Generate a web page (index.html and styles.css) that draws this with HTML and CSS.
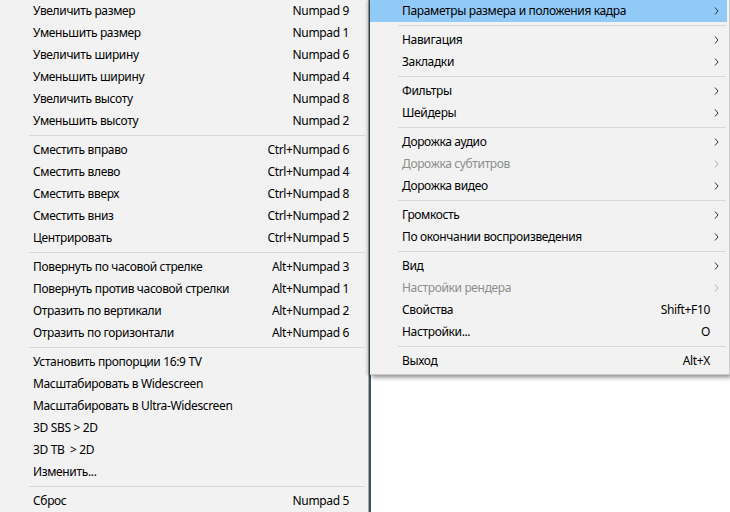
FILE: index.html
```html
<!DOCTYPE html>
<html>
  <head>
    <title>Контекстное меню</title>
    <link rel="stylesheet" href="styles.css">
  </head>
  <body>
    <div class="desk">
      <!-- submenu: frame size and position -->
      <ul class="menu menu-sub">
        <li class="item"><span>Увеличить размер</span><span class="key">Numpad 9</span></li>
        <li class="item"><span>Уменьшить размер</span><span class="key">Numpad 1</span></li>
        <li class="item"><span>Увеличить ширину</span><span class="key">Numpad 6</span></li>
        <li class="item"><span>Уменьшить ширину</span><span class="key">Numpad 4</span></li>
        <li class="item"><span>Увеличить высоту</span><span class="key">Numpad 8</span></li>
        <li class="item"><span>Уменьшить высоту</span><span class="key">Numpad 2</span></li>
        <li class="sep"></li>
        <li class="item"><span>Сместить вправо</span><span class="key">Ctrl+Numpad 6</span></li>
        <li class="item"><span>Сместить влево</span><span class="key">Ctrl+Numpad 4</span></li>
        <li class="item"><span>Сместить вверх</span><span class="key">Ctrl+Numpad 8</span></li>
        <li class="item"><span>Сместить вниз</span><span class="key">Ctrl+Numpad 2</span></li>
        <li class="item"><span>Центрировать</span><span class="key">Ctrl+Numpad 5</span></li>
        <li class="sep"></li>
        <li class="item"><span>Повернуть по часовой стрелке</span><span class="key">Alt+Numpad 3</span></li>
        <li class="item"><span>Повернуть против часовой стрелки</span><span class="key">Alt+Numpad 1</span></li>
        <li class="item"><span>Отразить по вертикали</span><span class="key">Alt+Numpad 2</span></li>
        <li class="item"><span>Отразить по горизонтали</span><span class="key">Alt+Numpad 6</span></li>
        <li class="sep"></li>
        <li class="item"><span>Установить пропорции 16:9 TV</span></li>
        <li class="item"><span>Масштабировать в Widescreen</span></li>
        <li class="item"><span>Масштабировать в Ultra-Widescreen</span></li>
        <li class="item"><span>3D SBS &gt; 2D</span></li>
        <li class="item"><span>3D TB &nbsp;&gt; 2D</span></li>
        <li class="item"><span>Изменить...</span></li>
        <li class="sep"></li>
        <li class="item"><span>Сброс</span><span class="key">Numpad 5</span></li>
      </ul>

      <!-- main player menu, drawn over the submenu -->
      <ul class="menu menu-main">
        <li class="item active"><span>Параметры размера и положения кадра</span><svg class="arrow" viewBox="0 0 5 8"><path d="M1 0.5 L4 4 L1 7.5"/></svg></li>
        <li class="sep"></li>
        <li class="item"><span>Навигация</span><svg class="arrow" viewBox="0 0 5 8"><path d="M1 0.5 L4 4 L1 7.5"/></svg></li>
        <li class="item"><span>Закладки</span><svg class="arrow" viewBox="0 0 5 8"><path d="M1 0.5 L4 4 L1 7.5"/></svg></li>
        <li class="sep"></li>
        <li class="item"><span>Фильтры</span><svg class="arrow" viewBox="0 0 5 8"><path d="M1 0.5 L4 4 L1 7.5"/></svg></li>
        <li class="item"><span>Шейдеры</span><svg class="arrow" viewBox="0 0 5 8"><path d="M1 0.5 L4 4 L1 7.5"/></svg></li>
        <li class="sep"></li>
        <li class="item"><span>Дорожка аудио</span><svg class="arrow" viewBox="0 0 5 8"><path d="M1 0.5 L4 4 L1 7.5"/></svg></li>
        <li class="item disabled"><span>Дорожка субтитров</span><svg class="arrow" viewBox="0 0 5 8"><path d="M1 0.5 L4 4 L1 7.5"/></svg></li>
        <li class="item"><span>Дорожка видео</span><svg class="arrow" viewBox="0 0 5 8"><path d="M1 0.5 L4 4 L1 7.5"/></svg></li>
        <li class="sep"></li>
        <li class="item"><span>Громкость</span><svg class="arrow" viewBox="0 0 5 8"><path d="M1 0.5 L4 4 L1 7.5"/></svg></li>
        <li class="item"><span>По окончании воспроизведения</span><svg class="arrow" viewBox="0 0 5 8"><path d="M1 0.5 L4 4 L1 7.5"/></svg></li>
        <li class="sep"></li>
        <li class="item"><span>Вид</span><svg class="arrow" viewBox="0 0 5 8"><path d="M1 0.5 L4 4 L1 7.5"/></svg></li>
        <li class="item disabled"><span>Настройки рендера</span><svg class="arrow" viewBox="0 0 5 8"><path d="M1 0.5 L4 4 L1 7.5"/></svg></li>
        <li class="item"><span>Свойства</span><span class="key">Shift+F10</span></li>
        <li class="item"><span>Настройки...</span><span class="key">O</span></li>
        <li class="sep"></li>
        <li class="item"><span>Выход</span><span class="key">Alt+X</span></li>
      </ul>
    </div>
  </body>
</html>
```

FILE: styles.css
```css
html, body {
  margin: 0;
  background: #ffffff;
  overflow: hidden;
}

body {
  font-family: "Noto Sans", "Open Sans", sans-serif;
  font-size: 12px;
  letter-spacing: -0.35px;
  color: #000000;
}

.desk {
  position: relative;
  width: 730px;
  height: 512px;
}

.menu {
  list-style: none;
  margin: 0;
  padding: 0;
  background: #f2f2f2;
}

.menu-sub {
  width: 368px;
  height: 512px;
  border-right: 1px solid #a9a9a9;
  box-shadow: 2px 0 0 #3c545c;
}

.menu-main {
  position: absolute;
  left: 370px;
  top: 0;
  width: 359px;
  padding-bottom: 2px;
  border-right: 1px solid #cccccc;
  border-bottom: 1px solid #cccccc;
  box-shadow: 2px 3px 4px rgba(0, 0, 0, 0.35), -3px 0 3px rgba(0, 0, 0, 0.2);
}

.item {
  display: flex;
  align-items: center;
  height: 22px;
  padding: 0 19px 1px 33px;
  box-sizing: border-box;
  white-space: nowrap;
}

.menu-main .item {
  padding-left: 32px;
  padding-right: 17px;
  margin-right: 2px;
}

.item .key {
  margin-left: auto;
}

.item .arrow {
  margin-left: auto;
  margin-right: -9px;
  width: 5px;
  height: 8px;
  fill: none;
  stroke: #333333;
  stroke-width: 1;
}

.item.active {
  background: #91c9f7;
}

.item.disabled {
  color: #8d8d8d;
}

.item.disabled .arrow {
  stroke: #b0b0b0;
}

.sep {
  height: 7px;
  margin-left: 29px;
  margin-right: 3px;
  position: relative;
}

.sep::after {
  content: "";
  position: absolute;
  left: 0;
  right: 0;
  top: 3px;
  height: 1px;
  background: #d7d7d7;
}

.menu-main .sep {
  margin-left: 28px;
}
```
